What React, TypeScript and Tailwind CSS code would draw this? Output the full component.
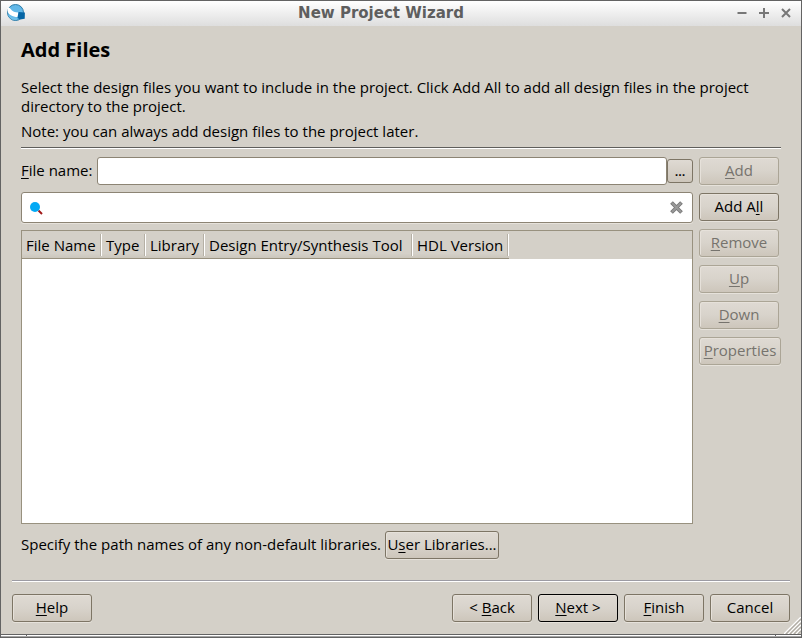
import React from "react";

const etched = "h-[2px] border-t border-b-white border-b";

type BtnProps = {
  children: React.ReactNode;
  disabled?: boolean;
  primary?: boolean;
  size?: string;
};

function Btn({ children, disabled, primary, size = "w-20" }: BtnProps) {
  const tone = disabled
    ? "border-[#aba596] text-[#76736d]"
    : primary
      ? "border-black text-black"
      : "border-[#7d7565] text-black";
  return (
    <button
      type="button"
      disabled={disabled}
      className={`${size} ${tone} flex h-7 shrink-0 items-center justify-center whitespace-nowrap rounded-[3px] border bg-linear-to-b from-[#dfdad3] via-[#d8d3cb] to-[#cdc6bb] pb-px shadow-[0_1px_0_#e6e2db,inset_1px_1px_0_#e6e1da]`}
    >
      <span>{children}</span>
    </button>
  );
}

function Key({ children }: { children: string }) {
  return <span className="underline decoration-1 underline-offset-2">{children}</span>;
}

function AppIcon() {
  return (
    <svg viewBox="0 0 20 20" className="h-5 w-5" aria-hidden="true">
      <circle cx="9.5" cy="9.5" r="8" fill="#62b8e8" stroke="#2a7ba8" strokeWidth="1" />
      <path d="M1.6 8 C1.2 4.5 2.6 3.6 4.2 5.4 C6.5 8.5 9 9.4 12.5 9.4 L11.5 14 C6.5 14 2.2 11.5 1.6 8Z" fill="#fff" />
      <path d="M2 11 C3.5 13.8 6.5 15 11 14.6 L11 16.8 C6 17.8 2.8 14.8 2 11Z" fill="#6fc0ea" />
      <path d="M12.5 9 L18.9 9.4 L18.7 15.8 L14 16.4 L11.6 15Z" fill="#0565a4" />
    </svg>
  );
}

const columns = [
  { label: "File Name", width: "w-20" },
  { label: "Type", width: "w-11" },
  { label: "Library", width: "w-[59px]" },
  { label: "Design Entry/Synthesis Tool", width: "w-52" },
  { label: "HDL Version", width: "w-24" },
];

export default function App() {
  return (
    <div className="flex min-h-screen flex-col border border-[#636363] bg-[#d4d0c8] font-['Open_Sans','Noto_Sans',sans-serif] text-[15px] leading-[19px] text-black">
      <header className="flex h-[25px] items-center bg-linear-to-b from-white to-[#dedede] pr-[9px] pb-px pl-[5px]">
        <AppIcon />
        <div className="flex-1 text-center font-['DejaVu_Sans',sans-serif] text-[15px] font-bold text-[#5e5e5e]">
          New Project Wizard
        </div>
        <div className="flex gap-2.5 text-[#777]">
          <button type="button" aria-label="Minimize">
            <svg viewBox="0 0 12 12" className="h-3 w-3" stroke="currentColor" strokeWidth="2" fill="none"><path d="M1.5 6H10.5" /></svg>
          </button>
          <button type="button" aria-label="Maximize">
            <svg viewBox="0 0 12 12" className="h-3 w-3" stroke="currentColor" strokeWidth="2" fill="none"><path d="M1 6H11M6 1V11" /></svg>
          </button>
          <button type="button" aria-label="Close">
            <svg viewBox="0 0 12 12" className="h-3 w-3" stroke="currentColor" strokeWidth="2" fill="none"><path d="M2 2L10 10M10 2L2 10" /></svg>
          </button>
        </div>
      </header>

      <main className="flex flex-1 flex-col px-5 pt-3">
        <h1 className="text-[20px] leading-6 font-bold">Add Files</h1>
        <p className="mt-4">
          Select the design files you want to include in the project. Click Add All to add all design files in the project
          directory to the project.
        </p>
        <p className="mt-1.5">Note: you can always add design files to the project later.</p>
        <div className={`${etched} mt-1.5 border-t-[#5f5e5b]`} />

        <div className="mt-2 flex flex-1 gap-1.5">
          <div className="flex min-w-0 flex-1 flex-col gap-[7px]">
            <div className="flex h-7 items-center">
              <label htmlFor="file-name" className="w-[76px] shrink-0 pb-px whitespace-nowrap">
                <Key>F</Key>ile name:
              </label>
              <input
                id="file-name"
                type="text"
                className="h-7 min-w-0 flex-1 rounded-[3px] border border-[#8c8474] bg-white px-1 outline-none"
              />
              <button
                type="button"
                aria-label="Browse"
                className="flex h-6 w-[26px] items-center justify-center rounded-[3px] border border-[#7d7565] bg-linear-to-b from-[#dfdad3] to-[#cdc6bb] text-[13px] font-semibold"
              >
                ...
              </button>
            </div>
            <div className="flex h-[31px] items-center rounded-[3px] border border-[#8c8474] bg-white px-2 shadow-[0_1px_0_#e6e2db]">
              <svg viewBox="0 0 13 14" className="h-3.5 w-[13px]" aria-hidden="true">
                <path d="M8.5 9.5L12 13" stroke="#a01818" strokeWidth="2" />
                <circle cx="5" cy="6" r="5" fill="#03a9f4" />
              </svg>
              <input type="text" aria-label="Filter files" className="min-w-0 flex-1 bg-transparent px-1 outline-none" />
              <button type="button" aria-label="Clear filter">
                <svg viewBox="0 0 14 14" className="h-3.5 w-3.5" aria-hidden="true">
                  <path d="M1.5 1.5L11.5 11.5M11.5 1.5L1.5 11.5" stroke="#777" strokeWidth="3.8" />
                  <path d="M2 2L11 11M11 2L2 11" stroke="#999" strokeWidth="2" />
                </svg>
              </button>
            </div>
            <div className="min-h-40 flex-1 border border-[#98917f] bg-white">
              <div className="bg-[#d4d0c8]">
                <table className="w-[487px] table-fixed border-collapse">
                  <thead>
                    <tr className="h-7 bg-linear-to-b from-[#d4d0c8] from-80% to-[#c9c4b9] shadow-[inset_0_-1px_0_#98917f]">
                      {columns.map((c) => (
                        <th key={c.label} scope="col" className={`${c.width} p-0 text-left font-normal`}>
                          <div className="flex h-[22px] items-center border-r border-white pl-1 whitespace-nowrap shadow-[inset_-1px_0_0_#b5b0a5]">
                            {c.label}
                          </div>
                        </th>
                      ))}
                    </tr>
                  </thead>
                </table>
              </div>
            </div>
          </div>

          <div className="flex w-[82px] flex-col gap-2">
            <Btn disabled><Key>A</Key>dd</Btn>
            <Btn>Add A<Key>l</Key>l</Btn>
            <Btn disabled><Key>R</Key>emove</Btn>
            <Btn disabled><Key>U</Key>p</Btn>
            <Btn disabled><Key>D</Key>own</Btn>
            <Btn disabled size="w-[82px]"><Key>P</Key>roperties</Btn>
          </div>
        </div>

        <div className="mt-[7px] flex items-center gap-1">
          <span className="pb-px">Specify the path names of any non-default libraries.</span>
          <Btn size="w-[114px]">U<Key>s</Key>er Libraries...</Btn>
        </div>
      </main>

      <footer className="mt-[21px]">
        <div className={`${etched} mx-[11px] border-t-[#9c9ba3]`} />
        <div className="relative flex gap-1.5 px-[11px] pt-3 pb-3">
          <Btn><Key>H</Key>elp</Btn>
          <div className="flex-1" />
          <Btn>&lt; <Key>B</Key>ack</Btn>
          <Btn primary><Key>N</Key>ext &gt;</Btn>
          <Btn><Key>F</Key>inish</Btn>
          <Btn>Cancel</Btn>
          <svg viewBox="0 0 17 17" className="absolute right-0 bottom-0 h-[17px] w-[17px]" aria-hidden="true">
            <path d="M0 17L17 0M4 17L17 4M8 17L17 8M12 17L17 12" stroke="#fff" strokeWidth="1.3" />
            <path d="M2 17L17 2M6 17L17 6M10 17L17 10M14 17L17 14" stroke="#b0aca4" strokeWidth="1.2" />
          </svg>
        </div>
        <div className="flex h-[3px] justify-between border-t border-b border-t-[#636363] border-b-[#a5a5a5] bg-white px-[25px]">
          <div className="w-px bg-[#636363]" />
          <div className="w-px bg-[#636363]" />
        </div>
      </footer>
    </div>
  );
}
